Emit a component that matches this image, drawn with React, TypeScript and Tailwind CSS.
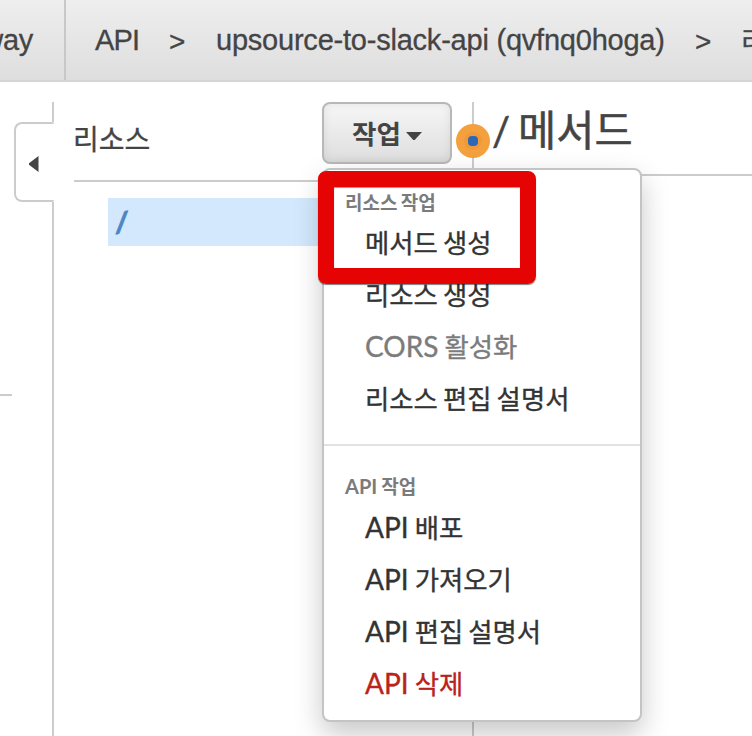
import React from 'react';

type Item = { latin?: string; korean: string; tone?: string };

const resourceItems: Item[] = [
  { korean: '메서드 생성' },
  { korean: '리소스 생성' },
  { latin: 'CORS', korean: '활성화', tone: 'text-[#7b7b7b]' },
  { korean: '리소스 편집 설명서' },
];

const apiItems: Item[] = [
  { latin: 'API', korean: '배포' },
  { latin: 'API', korean: '가져오기' },
  { latin: 'API', korean: '편집 설명서' },
  { latin: 'API', korean: '삭제', tone: 'text-[#b9231b]' },
];

const korean = "font-['Noto_Sans_CJK_KR',sans-serif]";

function MenuItem({ latin, korean: label, tone = 'text-[#333333]' }: Item) {
  return (
    <li className={`flex h-[52px] items-baseline pl-[41px] leading-[52px] [-webkit-text-stroke:0.35px_currentColor] ${tone}`}>
      {latin && <span className="mr-[6px] font-['Lato',sans-serif] text-[28px]">{latin}</span>}
      <span className={`${korean} text-[26.4px] [word-spacing:-0.8px]`}>{label}</span>
    </li>
  );
}

function Menu() {
  return (
    <div className="absolute top-[86px] left-[322px] z-10 h-[554px] w-[320px] rounded-[8px] border-2 border-[#c4c4c4] bg-white pt-[15px] shadow-[0_12px_28px_rgba(0,0,0,0.22)]">
      <div className={`h-[31px] pl-[21px] text-[19px] leading-[34px] font-bold text-[#7b7b7b] [word-spacing:-1px] ${korean}`}>리소스 작업</div>
      <ul>
        {resourceItems.map((item) => <MenuItem key={item.korean} {...item} />)}
      </ul>
      <hr className="mt-[20px] border-0 border-t-2 border-[#e2e2e2]" />
      <div className="mt-[23px] flex h-[32px] items-baseline pl-[21px] leading-[34px] font-bold text-[#7b7b7b]">
        <span className="mr-[4px] font-['Lato',sans-serif] text-[20px]">API</span>
        <span className={`${korean} text-[19px]`}>작업</span>
      </div>
      <ul>
        {apiItems.map((item) => <MenuItem key={item.korean} {...item} />)}
      </ul>
    </div>
  );
}

export default function App() {
  return (
    <div className="h-[736px] w-[752px] overflow-hidden bg-white text-[#444444]">
      <header className="flex h-[82px] border-b-2 border-[#d5d5d5] bg-linear-to-b from-[#eeeeee] to-[#dedede] font-['Liberation_Sans',sans-serif] text-[29px] leading-[80px] whitespace-nowrap [-webkit-text-stroke:0.3px_currentColor]">
        <div className="flex w-[66px] shrink-0 justify-end border-r-2 border-[#c8c8c8] pr-[31px] tracking-[-0.3px]">Gateway</div>
        <nav className="flex pl-[29px]">
          <span className="w-[74px] tracking-[-0.9px]">API</span>
          <span className="w-[47px] text-[28px] leading-[84px]">&gt;</span>
          <span className="w-[479px] tracking-[-0.22px]">upsource-to-slack-api (qvfnq0hoga)</span>
          <span className="w-[46px] text-[28px] leading-[84px]">&gt;</span>
          <span className={`${korean} text-[27px]`}>리소스</span>
        </nav>
      </header>

      <main className="relative flex h-[654px]">
        <aside className="flex w-[54px] shrink-0 flex-col pt-[20px]">
          <div className="h-[20px] border-r-2 border-[#cccccc]" />
          <button className="ml-[14px] flex h-[80px] w-[40px] items-center rounded-l-[8px] rounded-r-[2px] border-2 border-r-0 border-[#cccccc] pl-[13px]">
            <svg className="mt-[4px]" width="10" height="16" viewBox="0 0 10 16" fill="#444444">
              <path d="M9.5 0v16L0 8.7V7.3Z" />
            </svg>
          </button>
          <div className="flex grow border-r-2 border-[#cccccc]">
            <div className="mt-[192px] h-[2px] w-[12px] bg-[#cccccc]" />
          </div>
        </aside>

        <section className="ml-[20px] w-[398px] shrink-0 pt-[20px]">
          <div className="flex h-[80px] justify-between border-b-2 border-[#cccccc] pr-[20px]">
            <h2 className={`${korean} -ml-px text-[28px] leading-[73px] [-webkit-text-stroke:0.3px_currentColor]`}>리소스</h2>
            <button className="flex h-[62px] w-[130px] items-center rounded-[8px] border-2 border-[#b8b8b8] bg-linear-to-b from-[#f6f6f6] to-[#dedede] pl-[28px] shadow-[inset_0_0_8px_rgba(0,0,0,0.08)]">
              <span className={`${korean} text-[26.6px] leading-[56px] font-bold`}>작업</span>
              <svg className="mt-[5px] ml-[5px]" width="16" height="8" viewBox="0 0 16 8" fill="#444444">
                <path d="M0 0h16L8.7 8H7.3Z" />
              </svg>
            </button>
          </div>
          <div className="mt-[16px] ml-[34px] h-[48px] bg-[#d3e8fd] pl-[7px] font-['Lato',sans-serif] text-[29px] leading-[45px] font-bold text-[#4e86c4] [-webkit-text-stroke:0.8px_currentColor]">/</div>
        </section>

        <section className="mt-[20px] grow border-l-2 border-[#cccccc]">
          <h1 className="flex h-[74px] items-baseline border-b-2 border-[#cccccc] pl-[18px] leading-[52px] [-webkit-text-stroke:0.5px_currentColor]">
            <span className="mr-[8px] font-['Lato',sans-serif] text-[40px]">/</span>
            <span className={`${korean} text-[41.5px]`}>메서드</span>
          </h1>
        </section>

        <div className="absolute top-[42px] left-[456px] flex size-[34px] items-center justify-center rounded-full bg-[#f3a03d]">
          <div className="flex size-[18px] items-center justify-center rounded-full bg-[#ee9a3b]">
            <div className="size-[10px] rounded-[4px] bg-[#2d68b8]" />
          </div>
        </div>
        <Menu />
        <div className="absolute top-[89px] left-[318px] z-20 h-[113px] w-[218px] rounded-[8px] border-16 border-[#e60303] shadow-[0_1px_1px_rgba(0,0,0,0.5),inset_0_1px_1px_rgba(0,0,0,0.4)]" />
      </main>
    </div>
  );
}
